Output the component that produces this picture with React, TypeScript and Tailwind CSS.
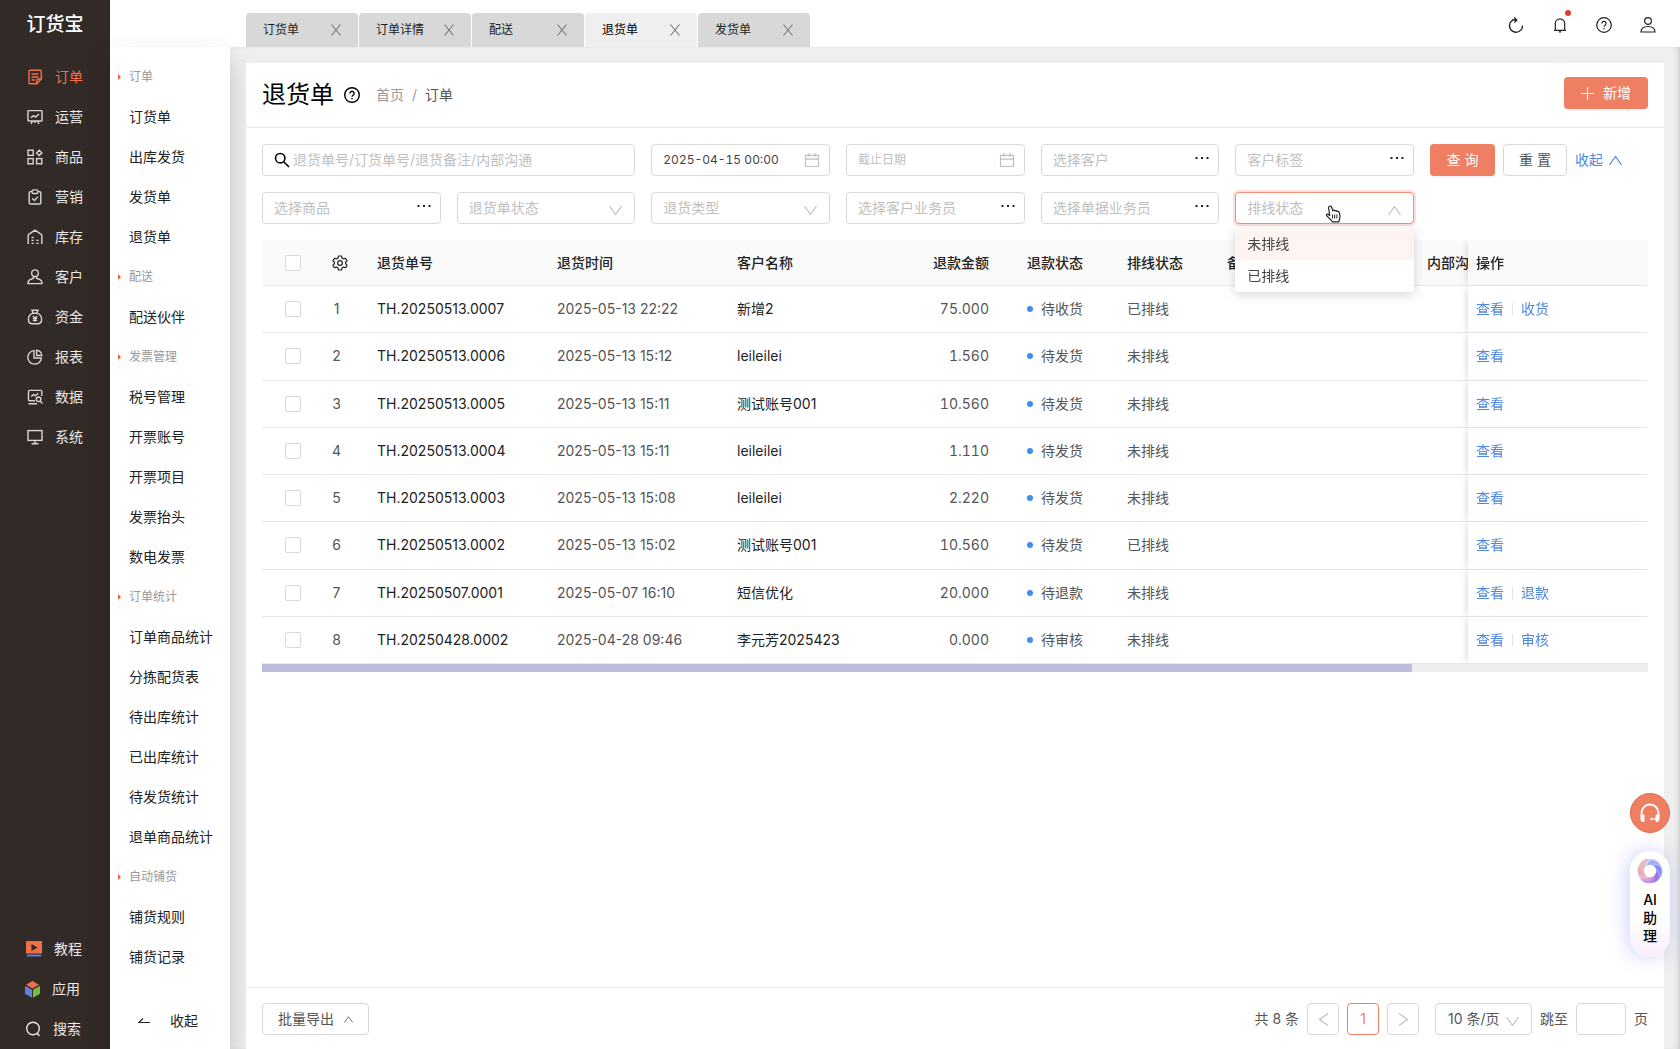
import type { ReactNode } from 'react';

function Svg({ size = 16, className = '', sw = 1.2, children }: { size?: number; className?: string; sw?: number; children: ReactNode }) {
  return (
    <svg width={size} height={size} viewBox="0 0 16 16" fill="none" stroke="currentColor" strokeWidth={sw} className={'shrink-0 ' + className} aria-hidden="true">
      {children}
    </svg>
  );
}

const ICONS: Record<string, ReactNode> = {
  order: (
    <>
      <path d="M14.200 9.500V2.200A1 1 0 0 0 13.200 1.200H3A1 1 0 0 0 2 2.200v11.600a1 1 0 0 0 1 1h6.500" />
      <path d="M4.500 5h7M4.500 8h7M4.500 11h3.500M14.200 10l-4.400 4.800V11a1 1 0 0 1 1-1h3.400z" />
    </>
  ),
  operate: (
    <>
      <rect x="1" y="1.600" width="14" height="10.400" rx="0.600" />
      <path d="M4 8.600l2.600-2 2 1.400 3.400-3M5.500 12.200L4 15M10.500 12.200L12 15M8 12v2" />
    </>
  ),
  goods: (
    <>
      <rect x="1" y="1.200" width="5.200" height="5.200" />
      <rect x="1" y="9.600" width="5.200" height="5.200" />
      <rect x="9.600" y="9.600" width="5.200" height="5.200" />
      <path d="M12.200 1.200l2.700 2.700-2.700 2.700-2.700-2.700z" />
    </>
  ),
  market: (
    <>
      <path d="M5 2.600H3.500a1.300 1.300 0 0 0-1.300 1.300v9.800A1.300 1.300 0 0 0 3.500 15h9a1.300 1.300 0 0 0 1.300-1.300V3.900a1.300 1.300 0 0 0-1.300-1.300H11" />
      <rect x="5" y="0.900" width="6" height="3.600" rx="1.600" />
      <path d="M5.200 9.200l2.300 2.200 3.500-3.800" />
    </>
  ),
  stock: (
    <>
      <path d="M1.200 15V6.200a1 1 0 0 1 .5-.9L8 1.200l6.300 4.100a1 1 0 0 1 .5.900V15" />
      <path d="M4.500 8.500h2.200M4.500 11.400h2.200M4.500 14.400h2.200M9.300 11.400h2.200M9.300 14.400h2.200" />
    </>
  ),
  customer: (
    <>
      <circle cx="8" cy="4.200" r="3.300" />
      <path d="M6.500 7.400v1.800L3 10.600c-1.300.5-2 1.500-2 4h14c0-2.500-.700-3.500-2-4L9.500 9.200V7.400" />
    </>
  ),
  money: (
    <>
      <path d="M5 1.200h6L9.800 4.200C12.600 5 14.600 7.600 14.600 10.300c0 3-2 4.500-4 4.500H5.400c-2 0-4-1.500-4-4.500C1.400 7.600 3.400 5 6.200 4.200zM5.800 4.200h4.400" />
      <path d="M6 7l2 2.500L10 7M8 9.500v3.300M5.800 9.600h4.400M5.800 11.400h4.400" />
    </>
  ),
  report: (
    <>
      <path d="M7 1.600A6.800 6.800 0 1 0 14.400 9H7z" />
      <path d="M9.600 1.200v5.300h5.200A5.600 5.600 0 0 0 9.600 1.200z" />
    </>
  ),
  data: (
    <>
      <path d="M14.800 7V2.400a1 1 0 0 0-1-1H2.500a1 1 0 0 0-1 1v8.400a1 1 0 0 0 1 1H8M1.500 14.800H10" />
      <path d="M4.200 7.500l2.300-2 1.600 1.300 3.200-2.600" />
      <circle cx="11.600" cy="10.300" r="2.300" />
      <path d="M13.200 12l2.200 2.600" />
    </>
  ),
  system: (
    <>
      <rect x="1" y="1.600" width="14" height="9.800" />
      <path d="M8 11.400v3.200M4.600 14.800h6.800" />
    </>
  ),
};

function Chevron({ up, size = 13, className = '' }: { up?: boolean; size?: number; className?: string }) {
  return (
    <svg width={size} height={size} viewBox="0 0 13 13" fill="none" stroke="currentColor" strokeWidth="1.200" className={'shrink-0 ' + className} aria-hidden="true">
      {up ? <path d="M0.500 11L6.500 2.500l6 8.500" /> : <path d="M0.500 2L6.500 10.500l6-8.500" />}
    </svg>
  );
}

function Cross() {
  return (
    <svg width="10" height="12" viewBox="0 0 10 12" fill="none" stroke="currentColor" strokeWidth="1.100" aria-hidden="true">
      <path d="M0.500 0.500l9 11M9.500 0.500l-9 11" />
    </svg>
  );
}

function Help({ className = '', sw = 1.200 }: { className?: string; sw?: number }) {
  return (
    <Svg className={className} sw={sw}>
      <circle cx="8" cy="8" r="7.300" />
      <path d="M5.900 6.400a2.100 2.100 0 1 1 3.200 1.800c-.700.500-1.100.800-1.100 1.600M8 11v1.200" />
    </Svg>
  );
}

const MENU = [
  ['order', '订单'], ['operate', '运营'], ['goods', '商品'], ['market', '营销'], ['stock', '库存'],
  ['customer', '客户'], ['money', '资金'], ['report', '报表'], ['data', '数据'], ['system', '系统'],
];

function Sidebar() {
  return (
    <aside className="flex w-[110px] shrink-0 flex-col bg-[#322a26] text-sm text-[#ebe8e6]">
      <div className="flex h-12 items-center justify-center text-[19px] leading-none font-medium text-white">订货宝</div>
      <nav className="flex flex-1 flex-col pt-[9px]">
        {MENU.map(([icon, label], i) => (
          <a key={label} href="#" className={'flex h-10 items-center gap-3 pl-[27px] ' + (i === 0 ? 'text-[#f2714a]' : '')}>
            <Svg sw={1.400} className={i === 0 ? '' : 'text-[#d8d5d3]'}>{ICONS[icon]}</Svg>
            {label}
          </a>
        ))}
      </nav>
      <div className="flex flex-col">
        <a href="#" className="flex h-10 items-center gap-3 pl-[26px]">
          <svg width="16" height="16" viewBox="0 0 16 16" aria-hidden="true">
            <rect width="16" height="12.500" rx="0.500" fill="#ee7046" />
            <path d="M5.500 3l6 3.500-6 3.500z" fill="#322a26" />
            <rect x="1" y="13.500" width="14" height="2" fill="#5b7fd6" />
          </svg>
          教程
        </a>
        <a href="#" className="flex h-10 items-center gap-3 pl-[25px]">
          <svg width="15" height="17" viewBox="0 0 15 17" aria-hidden="true">
            <path d="M7.500 0l6.500 3.800-6.500 3.800L1 3.800z" fill="#ee7046" />
            <path d="M0 4.800l7 4v8l-7-4z" fill="#6480d8" />
            <path d="M15 4.800l-7 4v8l7-4z" fill="#73bf45" />
          </svg>
          应用
        </a>
        <a href="#" className="flex h-10 items-center gap-3 pl-[25px]">
          <Svg sw={1.400}><circle cx="8" cy="7.500" r="6.300" /><path d="M11.800 12l2.700 2.800" /></Svg>
          搜索
        </a>
      </div>
    </aside>
  );
}

const GROUPS: [string, string[]][] = [
  ['订单', ['订货单', '出库发货', '发货单', '退货单']],
  ['配送', ['配送伙伴']],
  ['发票管理', ['税号管理', '开票账号', '开票项目', '发票抬头', '数电发票']],
  ['订单统计', ['订单商品统计', '分拣配货表', '待出库统计', '已出库统计', '待发货统计', '退单商品统计']],
  ['自动铺货', ['铺货规则', '铺货记录']],
];

function SubMenu() {
  return (
    <nav className="relative flex w-[120px] shrink-0 flex-col bg-white pt-[10px] text-sm text-[#222] shadow-[0_12px_24px_rgba(0,0,0,0.2)]">
      {GROUPS.map(([title, items]) => (
        <div key={title} className="flex flex-col">
          <h2 className="flex h-10 items-center gap-2 pl-2 text-xs text-[#999]">
            <svg width="3" height="6" viewBox="0 0 3 6" aria-hidden="true"><path d="M0 0l3 3-3 3z" fill="#f2612f" /></svg>
            {title}
          </h2>
          {items.map((t) => (
            <a key={t} href="#" className="flex h-10 items-center pl-[19px] whitespace-nowrap">{t}</a>
          ))}
        </div>
      ))}
      <button type="button" className="mt-auto mb-2 flex h-10 items-center gap-5 pl-7">
        <svg width="12" height="6" viewBox="0 0 12 6" fill="none" stroke="currentColor" strokeWidth="1.200" aria-hidden="true"><path d="M5 0.500L0.800 4.500H12" /></svg>
        收起
      </button>
    </nav>
  );
}

const TABS = ['订货单', '订单详情', '配送', '退货单', '发货单'];

function Header() {
  return (
    <header className="flex h-[47px] shrink-0 items-end justify-between bg-white pl-[136px]">
      <div className="relative z-10 flex gap-px text-xs text-[#222]">
        {TABS.map((t) => (
          <div key={t} className={'flex h-[34px] w-28 items-center justify-between rounded-t px-[17px] ' + (t === '退货单' ? 'bg-[#efefef] text-black' : 'bg-[#d8d8d8]')}>
            <a href="#">{t}</a>
            <button type="button" aria-label={'关闭' + t} className="text-[#777]"><Cross /></button>
          </div>
        ))}
      </div>
      <div className="flex h-11 items-center gap-7 pr-6 text-[#222]">
        <button type="button" aria-label="刷新">
          <Svg sw={1.300}><path d="M4.500 3.200A6.500 6.500 0 1 0 14.500 8.500M4 3h4.500M6 0.500L8.800 3 6.500 5.600" /></Svg>
        </button>
        <button type="button" aria-label="消息" className="relative">
          <Svg><path d="M3.300 13V6.500a4.700 4.700 0 0 1 9.400 0V13M2 13.300h12M6.800 14.800h2.400" /></Svg>
          <span className="absolute -top-[7px] -right-[3px] size-[6px] rounded-full bg-[#e33b33]" />
        </button>
        <button type="button" aria-label="帮助"><Help /></button>
        <button type="button" aria-label="账户">
          <Svg><circle cx="8" cy="4" r="3.400" /><path d="M1 15c0-3.500 3-5.500 7-5.500s7 2 7 5.500z" /></Svg>
        </button>
      </div>
    </header>
  );
}

const BOX = 'flex h-8 min-w-0 items-center rounded border border-[#d9d9d9] bg-white pl-[11px]';

function PickField({ label }: { label: string }) {
  return (
    <div className={BOX + ' pr-[9px]'}>
      <input aria-label={label} placeholder={label} className="w-full min-w-0 bg-transparent text-sm outline-none placeholder:text-[#bfbfbf]" />
      <button type="button" aria-label={label + '更多'} className="mb-1">
        <svg width="14" height="4" viewBox="0 0 14 4" fill="#222" aria-hidden="true">
          <rect x="0.500" y="1" width="2" height="2" /><rect x="6" y="1" width="2" height="2" /><rect x="11.500" y="1" width="2" height="2" />
        </svg>
      </button>
    </div>
  );
}

function DateField({ label, value }: { label: string; value?: string }) {
  return (
    <div className={BOX + ' pr-[9px]'}>
      <input aria-label={label} placeholder={label} defaultValue={value} className="w-full min-w-0 bg-transparent text-xs text-[#444] tabular-nums outline-none placeholder:text-[#bfbfbf]" />
      <Svg className="text-[#bfbfbf]"><path d="M1.500 3.300h13v11.200h-13zM1.500 7.200h13M5 1v3.800M11 1v3.800" /></Svg>
    </div>
  );
}

function SelectField({ label, open, children }: { label: string; open?: boolean; children?: ReactNode }) {
  return (
    <div className={'relative flex h-8 min-w-0 items-center rounded border bg-white ' + (open ? 'border-[#f2917a] shadow-[0_0_0_2px_rgba(238,127,99,0.25)]' : 'border-[#d9d9d9]')}>
      <select aria-label={label} className="h-full w-full min-w-0 appearance-none bg-transparent pl-[11px] text-sm text-[#bfbfbf] outline-none">
        <option>{label}</option>
      </select>
      <Chevron up={open} className="pointer-events-none absolute top-[11px] right-3 text-[#bfbfbf]" />
      {children}
    </div>
  );
}

function HandCursor() {
  return (
    <svg width="17" height="18" viewBox="0 0 17 18" className="pointer-events-none absolute top-3 left-[89px] z-30" fill="#fff" stroke="#222" strokeWidth="1.200" strokeLinejoin="round" aria-hidden="true">
      <path d="M4.500 1.200c1-.500 1.700 0 2 .8l1.400 3.800c.500-.900 1.700-.8 2.100.2.700-.7 1.800-.4 2.100.5.800-.5 1.800 0 2 .8l.9 3.500c.3 1.700-.5 2.500-.8 4l-.2 2H7.300L6 15 1.800 10.900c-1-1 .2-2.200 1.500-1.500l1.400 1L3.600 3c-.2-.8.200-1.500.9-1.800z" />
      <path d="M7.500 9.500v4M9.700 9.500v4M11.900 9.500v4" strokeWidth="1" />
    </svg>
  );
}

function Filters() {
  return (
    <div className="flex items-start gap-4 px-4 pt-4">
      <div className="grid flex-1 grid-cols-6 gap-4">
        <div className={BOX + ' col-span-2 gap-[3px]'}>
          <Svg sw={1.600} className="text-black"><circle cx="6.200" cy="6.200" r="4.700" /><path d="M9.700 9.700L15 15" /></Svg>
          <input aria-label="关键字" placeholder="退货单号/订货单号/退货备注/内部沟通" className="w-full min-w-0 bg-transparent text-sm outline-none placeholder:text-[#bfbfbf]" />
        </div>
        <DateField label="开始日期" value="2025-04-15 00:00" />
        <DateField label="截止日期" />
        <PickField label="选择客户" />
        <PickField label="客户标签" />
        <PickField label="选择商品" />
        <SelectField label="退货单状态" />
        <SelectField label="退货类型" />
        <PickField label="选择客户业务员" />
        <PickField label="选择单据业务员" />
        <SelectField label="排线状态" open>
          <HandCursor />
          <ul role="listbox" aria-label="排线状态" className="absolute top-[34px] -left-px z-20 w-[calc(100%+2px)] rounded bg-white pt-px text-sm text-[#444] shadow-[0_3px_12px_rgba(0,0,0,0.16)]">
            <li role="option" aria-selected="true" className="flex h-8 items-center bg-[#fef4f1] px-3">未排线</li>
            <li role="option" aria-selected="false" className="flex h-8 items-center px-3">已排线</li>
          </ul>
        </SelectField>
      </div>
      <div className="flex w-[218px] items-center gap-2 text-sm">
        <button type="button" className="h-8 w-[65px] rounded bg-[#ee7f63] text-white shadow-[0_2px_0_rgba(0,0,0,0.04)]">查 询</button>
        <button type="button" className="h-8 w-16 rounded border border-[#d9d9d9] bg-white text-[#555]">重 置</button>
        <button type="button" className="flex items-center gap-[6px] text-[#4f86e0]">收起<Chevron up /></button>
      </div>
    </div>
  );
}

type Row = [string, string, string, string, string, string, string?];
const ROWS: Row[] = [
  ['TH.20250513.0007', '2025-05-13 22:22', '新增2', '75.000', '待收货', '已排线', '收货'],
  ['TH.20250513.0006', '2025-05-13 15:12', 'leileilei', '1.560', '待发货', '未排线'],
  ['TH.20250513.0005', '2025-05-13 15:11', '测试账号001', '10.560', '待发货', '未排线'],
  ['TH.20250513.0004', '2025-05-13 15:11', 'leileilei', '1.110', '待发货', '未排线'],
  ['TH.20250513.0003', '2025-05-13 15:08', 'leileilei', '2.220', '待发货', '未排线'],
  ['TH.20250513.0002', '2025-05-13 15:02', '测试账号001', '10.560', '待发货', '已排线'],
  ['TH.20250507.0001', '2025-05-07 16:10', '短信优化', '20.000', '待退款', '未排线', '退款'],
  ['TH.20250428.0002', '2025-04-28 09:46', '李元芳2025423', '0.000', '待审核', '未排线', '审核'],
];

function Check({ label }: { label: string }) {
  return <input type="checkbox" aria-label={label} className="block size-4 appearance-none rounded-xs border border-[#d9d9d9] bg-white" />;
}

const CELL = 'border-b border-[#e8e8e8] px-2 py-0 ';
const STICKY = 'sticky right-0 z-10 shadow-[-4px_0_6px_-2px_rgba(0,0,0,0.12)] ';

function OrderTable() {
  return (
    <div className="px-4 pt-4">
      <div className="overflow-hidden">
        <table className="h-[424px] w-[1668px] table-fixed border-separate border-spacing-0 text-left text-sm text-[#555]">
          <colgroup>
            <col className="w-[60px]" /><col className="w-[47px]" /><col className="w-[180px]" /><col className="w-[180px]" /><col className="w-[160px]" />
            <col className="w-[130px]" /><col className="w-[100px]" /><col className="w-[100px]" /><col className="w-[200px]" /><col /><col className="w-[180px]" />
          </colgroup>
          <thead>
            <tr className="h-[46px] bg-[#fafafa] text-[#222]">
              <th className={CELL + 'pl-[23px]'}><Check label="全选" /></th>
              <th className={CELL}>
                <button type="button" aria-label="列设置" className="ml-[2px] block">
                  <Svg><path d="M6.500 1h3l.5 2 1.600.9 2-.6 1.500 2.600L13.600 7.200v1.600l1.500 1.300-1.500 2.600-2-.6-1.600.9-.5 2h-3L6 13l-1.600-.9-2 .6L.9 10.100l1.500-1.300V7.200L.9 5.900l1.500-2.600 2 .6L6 3z" strokeLinejoin="round" /><circle cx="8" cy="8" r="2.400" /></Svg>
                </button>
              </th>
              <th className={CELL + 'font-medium'}>退货单号</th>
              <th className={CELL + 'font-medium'}>退货时间</th>
              <th className={CELL + 'font-medium'}>客户名称</th>
              <th className={CELL + 'pr-[30px] text-right font-medium'}>退款金额</th>
              <th className={CELL + 'font-medium'}>退款状态</th>
              <th className={CELL + 'font-medium'}>排线状态</th>
              <th className={CELL + 'font-medium'}>备注</th>
              <th className={CELL + 'font-medium'}>内部沟</th>
              <th className={CELL + STICKY + 'bg-[#fafafa] font-medium'}>操作</th>
            </tr>
          </thead>
          <tbody>
            {ROWS.map(([no, time, customer, amount, status, route, extra], i) => (
              <tr key={no}>
                <td className={CELL + 'pl-[23px]'}><Check label={'选择' + no} /></td>
                <td className={CELL + 'pr-[18px] pl-0 text-center'}>{i + 1}</td>
                <td className={CELL + 'text-[#222]'}>{no}</td>
                <td className={CELL}>{time}</td>
                <td className={CELL + 'text-[#222]'}>{customer}</td>
                <td className={CELL + 'pr-[30px] text-right tabular-nums'}>{amount}</td>
                <td className={CELL}>
                  <span className="flex items-center gap-2"><i className="size-[6px] rounded-full bg-[#3f8cf5]" />{status}</span>
                </td>
                <td className={CELL}>{route}</td>
                <td className={CELL} />
                <td className={CELL} />
                <td className={CELL + STICKY + 'bg-white text-[#4f86e0]'}>
                  <span className="flex items-center gap-2">
                    <a href="#">查看</a>
                    {extra && <><i className="h-3 w-px bg-[#e3e3e3]" /><a href="#">{extra}</a></>}
                  </span>
                </td>
              </tr>
            ))}
          </tbody>
        </table>
      </div>
      <div className="h-2 bg-[#eee]"><div className="h-2 w-[83%] bg-[#bcbbdb]" /></div>
    </div>
  );
}

function Footer() {
  const sq = 'flex h-8 w-8 items-center justify-center rounded border ';
  return (
    <footer className="mt-auto flex h-[62px] items-start justify-between border-t border-[#eaeaea] px-4 pt-[15px] text-sm text-[#555]">
      <button type="button" className="flex h-8 items-center gap-[10px] rounded border border-[#d9d9d9] px-[15px]">批量导出<Chevron up size={9} /></button>
      <div className="flex items-center gap-2">
        <span>共 8 条</span>
        <button type="button" aria-label="上一页" className={sq + 'border-[#d9d9d9] text-[#bfbfbf]'}><Chevron className="rotate-90" /></button>
        <button type="button" className={sq + 'border-[#ee7f63] text-[#ee7f63]'}>1</button>
        <button type="button" aria-label="下一页" className={sq + 'border-[#d9d9d9] text-[#bfbfbf]'}><Chevron className="-rotate-90" /></button>
        <span className="relative ml-2 flex h-8 w-[97px] items-center rounded border border-[#d9d9d9]">
          <select aria-label="每页条数" className="h-full w-full appearance-none bg-transparent pl-3 outline-none"><option>10 条/页</option></select>
          <Chevron className="pointer-events-none absolute top-[11px] right-3 text-[#bfbfbf]" />
        </span>
        <label className="flex items-center gap-2">跳至<input aria-label="页码" className="h-8 w-[50px] rounded border border-[#d9d9d9]" /></label>
        <span>页</span>
      </div>
    </footer>
  );
}

const PETALS = [
  ['#f0a080', 'rotate(-60 13 13)'], ['#cfc0ee', 'rotate(0 13 13)'], ['#85a2f4', 'rotate(60 13 13)'],
  ['#7b7cf0', 'rotate(120 13 13)'], ['#a463ee', 'rotate(180 13 13)'], ['#e3a5c0', 'rotate(240 13 13)'],
];

function Floating() {
  return (
    <div className="absolute right-[10px] bottom-[92px] z-20 flex w-10 flex-col gap-[18px]">
      <button type="button" aria-label="客服" className="flex size-10 items-center justify-center rounded-full border border-[#e8694a] bg-[#ee7f63] text-white">
        <svg width="22" height="22" viewBox="0 0 22 22" fill="none" stroke="currentColor" strokeWidth="1.800" aria-hidden="true">
          <path d="M2.500 14v-3a8.500 8.500 0 0 1 17 0v3" />
          <path d="M2 13h3v6.500H4a2 2 0 0 1-2-2zM20 13h-3v6.500h1a2 2 0 0 0 2-2z" fill="currentColor" strokeWidth="1" />
          <circle cx="12.500" cy="17" r="1.200" fill="currentColor" stroke="none" /><path d="M12.500 17H17" strokeWidth="1.200" />
        </svg>
      </button>
      <button type="button" className="flex h-[106px] flex-col items-center rounded-full bg-linear-to-b from-white from-60% to-[#f8effb] pt-[7px] text-sm leading-[18px] font-medium text-black shadow-[-2px_0_20px_rgba(110,125,255,0.35)]">
        <svg width="26" height="26" viewBox="0 0 26 26" className="mb-[7px]" aria-hidden="true">
          {PETALS.map(([fill, turn]) => (
            <path key={turn} d="M4.500 6C10-1 19-1 23 6C19 4.500 16 5 13 7C10 8 8 9.500 7 13C5 11 4 8.500 4.500 6z" fill={fill} opacity="0.750" transform={turn} />
          ))}
          <circle cx="13" cy="13" r="6.200" fill="#fff" />
        </svg>
        <span>AI</span><span>助</span><span>理</span>
      </button>
    </div>
  );
}

export default function App() {
  return (
    <div className="relative flex h-screen min-h-[960px] overflow-hidden bg-[#efefef] font-[Inter,'Noto_Sans_CJK_SC',sans-serif]">
      <Sidebar />
      <div className="flex min-w-0 flex-1 flex-col">
        <Header />
        <div className="flex min-h-0 flex-1">
          <SubMenu />
          <main className="relative flex min-w-0 flex-1 flex-col px-4 pt-4 shadow-[inset_-4px_0_5px_-2px_rgba(0,0,0,0.15)]">
            <section className="flex flex-1 flex-col bg-white">
              <div className="flex h-[65px] items-center border-b border-[#eaeaea] px-4">
                <h1 className="text-2xl text-black">退货单</h1>
                <Help className="ml-[10px] text-black" sw={1.400} />
                <p className="ml-4 flex gap-2 text-sm text-[#999]"><a href="#">首页</a><span>/</span><span className="text-[#555]">订单</span></p>
                <button type="button" className="mb-1 ml-auto flex h-8 w-[84px] items-center justify-center gap-[9px] rounded bg-[#ee7f63] text-sm text-white shadow-[0_2px_0_rgba(0,0,0,0.04)]">
                  <svg width="13" height="13" viewBox="0 0 13 13" stroke="currentColor" aria-hidden="true"><path d="M6.500 0v13M0 6.500h13" /></svg>
                  新增
                </button>
              </div>
              <Filters />
              <OrderTable />
              <Footer />
            </section>
          </main>
        </div>
      </div>
      <Floating />
    </div>
  );
}
